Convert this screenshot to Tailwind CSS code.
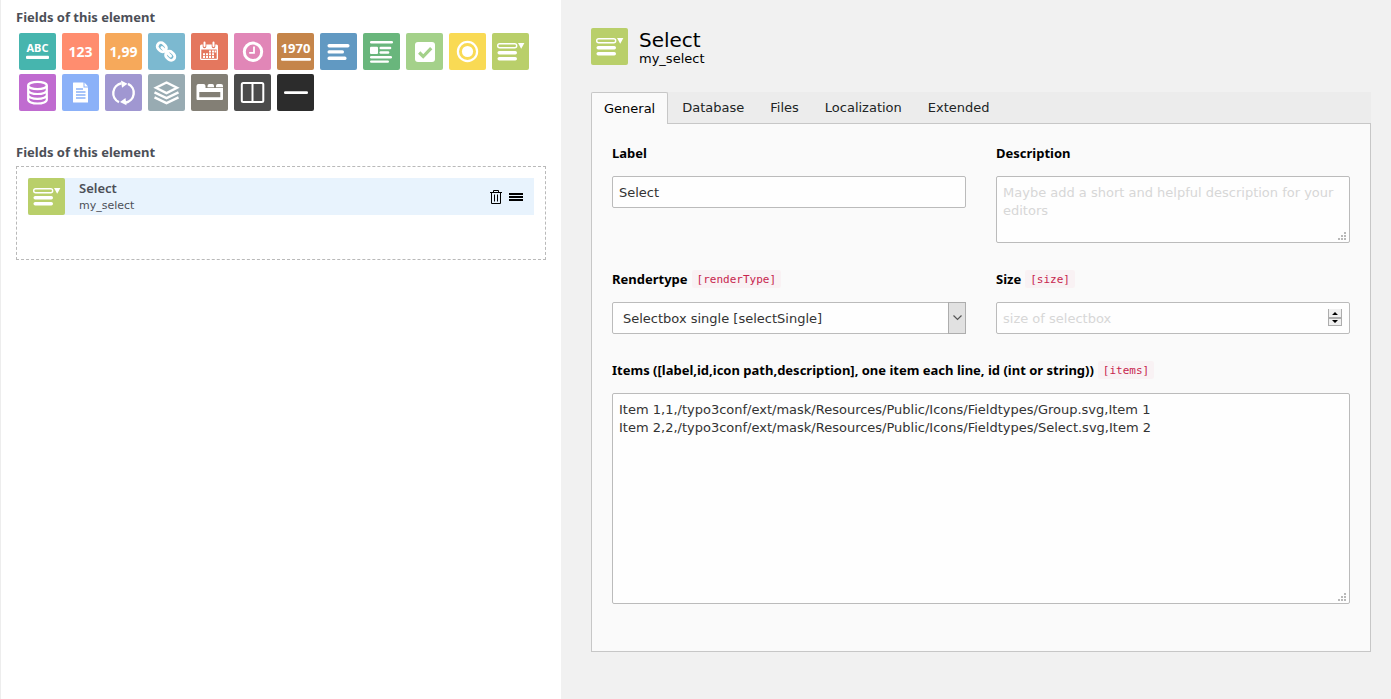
<!DOCTYPE html>
<html lang="en">
<head>
<meta charset="utf-8">
<meta name="viewport" content="width=device-width, initial-scale=1">
<title>Mask – Fields of this element</title>
<script src="https://cdn.jsdelivr.net/npm/@tailwindcss/browser@4"></script>
</head>
<body class="min-h-screen bg-[#f1f1f1] text-[13px] leading-[18px] text-black font-['DejaVu_Sans',Verdana,sans-serif]">
<svg class="hidden" aria-hidden="true">
  <symbol id="select-icon" viewBox="0 0 37 37">
    <rect x="5.7" y="10.7" width="19" height="4" rx="2" fill="none" stroke="#fff" stroke-width="1.4"/>
    <path d="M26 10h6.4l-3.2 5.8z" fill="#fff"/>
    <rect x="5.5" y="18" width="19.5" height="3.4" rx="1.7" fill="#fff"/>
    <rect x="5.5" y="24" width="19.5" height="3.4" rx="1.7" fill="#fff"/>
  </symbol>
  <symbol id="grip" viewBox="0 0 8 8">
    <path d="M6 0h2v2H6zM3 3h2v2H3zM6 3h2v2H6zM0 6h2v2H0zM3 6h2v2H3zM6 6h2v2H6z" fill="#b9b9b9"/>
  </symbol>
</svg>
<div class="grid min-h-screen grid-cols-[minmax(0,561fr)_minmax(0,830fr)]">
  <section class="border-l border-[#ededed] bg-white pl-[15px] pr-[15px] pt-2">
    <h2 class="text-[13px] font-bold text-[#4c4f57] font-['Noto_Sans','DejaVu_Sans',sans-serif]">Fields of this element</h2>
    <div class="mt-[7px] flex flex-wrap gap-x-[6px] gap-y-1 pl-[3px] text-white">
      <button type="button" aria-label="String" class="size-[37px] rounded-[2px] bg-[#46b5ae]"><svg viewBox="0 0 37 37"><text x="18.5" y="19" text-anchor="middle" class="fill-white text-[11px] font-bold font-['Noto_Sans',sans-serif]">ABC</text><rect x="7" y="22.7" width="23" height="3.2" rx="1" fill="#fff"/></svg></button>
      <button type="button" aria-label="Integer" class="size-[37px] rounded-[2px] bg-[#ff8d6f]"><svg viewBox="0 0 37 37"><text x="18.5" y="24" text-anchor="middle" class="fill-white text-[14px] font-bold font-['Noto_Sans',sans-serif]">123</text></svg></button>
      <button type="button" aria-label="Float" class="size-[37px] rounded-[2px] bg-[#f6a95b]"><svg viewBox="0 0 37 37"><text x="18.5" y="24" text-anchor="middle" class="fill-white text-[14px] font-bold font-['Noto_Sans',sans-serif]">1,99</text></svg></button>
      <button type="button" aria-label="Link" class="size-[37px] rounded-[2px] bg-[#7cb9d0]"><svg viewBox="0 0 37 37" fill="none" stroke="#fff" stroke-width="2.8"><rect x="-5" y="-3.7" width="10" height="7.4" rx="3.7" transform="translate(13.8 14.2) rotate(45)"/><rect x="-5" y="-3.7" width="10" height="7.4" rx="3.7" transform="translate(22.2 22.8) rotate(45)"/><path d="M14 14.5l8.5 8.5" stroke-width="3" stroke-linecap="round"/></svg></button>
      <button type="button" aria-label="Date" class="size-[37px] rounded-[2px] bg-[#e4775e]"><svg viewBox="0 0 37 37"><path d="M9 13v12.5q0 1.500 1.500 1.500h15q1.500 0 1.500-1.500V13q0-1.500-1.500-1.500h-15Q9 11.500 9 13zM10.300 16.500h15.400v9.200h-15.400z" fill="#fff" fill-rule="evenodd"/><path d="M13.500 9.500v4M22.500 9.500v4" stroke="#e4775e" stroke-width="3.600" stroke-linecap="round"/><path d="M13.500 9.500v3.500M22.500 9.500v3.500" stroke="#fff" stroke-width="2" stroke-linecap="round"/><path d="M18 17.500h2v2h-2zM21 17.500h2v2h-2zM23.600 17.500h1.600v2h-1.600zM12 20.300h2v2h-2zM15 20.300h2v2h-2zM18 20.300h2v2h-2zM21 20.300h2v2h-2zM12 23h2v2h-2zM15 23h2v2h-2zM18 23h2v2h-2zM21 23h2v2h-2z" fill="#fff"/></svg></button>
      <button type="button" aria-label="Datetime" class="size-[37px] rounded-[2px] bg-[#e186b7]"><svg viewBox="0 0 37 37" fill="none" stroke="#fff"><circle cx="19" cy="18.800" r="8.700" stroke-width="3"/><path d="M20 13.500v6.300h-4.800" stroke-width="1.800"/></svg></button>
      <button type="button" aria-label="Timestamp" class="size-[37px] rounded-[2px] bg-[#c5854a]"><svg viewBox="0 0 37 37"><text x="18.500" y="20" text-anchor="middle" class="fill-white text-[13px] font-bold font-['Noto_Sans',sans-serif]">1970</text><rect x="4" y="25" width="30" height="2.800" rx="1.200" fill="#fff"/></svg></button>
      <button type="button" aria-label="Text" class="size-[37px] rounded-[2px] bg-[#6199c2]"><svg viewBox="0 0 37 37" fill="#fff"><rect x="7.500" y="11" width="22" height="3.400" rx="1.600"/><rect x="7.500" y="17.200" width="16.500" height="3.400" rx="1.600"/><rect x="7.500" y="23.600" width="19" height="3.400" rx="1.600"/></svg></button>
      <button type="button" aria-label="Richtext" class="size-[37px] rounded-[2px] bg-[#69b67c]"><svg viewBox="0 0 37 37" fill="#fff"><rect x="7" y="8" width="23" height="2.600" rx="1.300"/><rect x="7" y="13.700" width="8" height="7.300" rx="1"/><rect x="16.500" y="13.800" width="11.800" height="2.400" rx="1.200"/><rect x="16.500" y="18.300" width="9.800" height="2.400" rx="1.200"/><rect x="7" y="23" width="22" height="2.400" rx="1.200"/><rect x="7" y="27.400" width="19" height="2.400" rx="1.200"/></svg></button>
      <button type="button" aria-label="Checkbox" class="size-[37px] rounded-[2px] bg-[#a4d18a]"><svg viewBox="0 0 37 37"><rect x="9" y="9" width="20" height="20" rx="3" fill="#fff"/><path d="M13.200 19.500l4 4 8-8.400" fill="none" stroke="#a4d18a" stroke-width="3.200"/></svg></button>
      <button type="button" aria-label="Radio" class="size-[37px] rounded-[2px] bg-[#f9da54]"><svg viewBox="0 0 37 37"><circle cx="18.500" cy="18.500" r="9.600" fill="none" stroke="#fff" stroke-width="2.200"/><circle cx="18.500" cy="18.500" r="5.600" fill="#fff"/></svg></button>
      <button type="button" aria-label="Select" class="size-[37px] rounded-[2px] bg-[#b9cf6a]"><svg viewBox="0 0 37 37"><use href="#select-icon"/></svg></button>
      <button type="button" aria-label="Group" class="size-[37px] rounded-[2px] bg-[#c06bd0]"><svg viewBox="0 0 37 37" fill="none" stroke="#fff" stroke-width="2.200"><ellipse cx="18.500" cy="11.500" rx="9.300" ry="3.700"/><path d="M9.200 11.500v14.300c0 2 4 3.700 9.300 3.700s9.300-1.700 9.300-3.700V11.500M9.200 16.300c0 2 4 3.700 9.300 3.700s9.300-1.700 9.300-3.700M9.200 21.100c0 2 4 3.700 9.300 3.700s9.300-1.700 9.300-3.700"/></svg></button>
      <button type="button" aria-label="File" class="size-[37px] rounded-[2px] bg-[#8bb1f8]"><svg viewBox="0 0 37 37"><path d="M11.500 8.500h10v5h4.500v15H11.500q-.5 0-.5-.5V9q0-.5.500-.5zM22.500 8.500l3.500 4h-3.500z" fill="#fff"/><path d="M14 15h7M14 18h9.500M14 21h9.500M14 24h9.500" stroke="#8bb1f8" stroke-width="1.300"/></svg></button>
      <button type="button" aria-label="Inline" class="size-[37px] rounded-[2px] bg-[#a097d1]"><svg viewBox="0 0 37 37"><path d="M14 28.200A10 10 0 0 1 16.500 9.300M23 9.800a10 10 0 0 1-2.500 18.900" fill="none" stroke="#fff" stroke-width="2.400"/><path d="M16 6.500l6.500 3.200-5.500 4zM21.500 31.300l-6.500-3.200 5.500-4z" fill="#fff"/></svg></button>
      <button type="button" aria-label="Content" class="size-[37px] rounded-[2px] bg-[#98abb2]"><svg viewBox="0 0 37 37" fill="none" stroke="#fff" stroke-width="2.400"><path d="M18.500 8.500l10.500 5.300-10.500 5.300L8 13.800z"/><path d="M6.500 18.300l12 5.900 12-5.900M6.500 23.300l12 5.900 12-5.900"/></svg></button>
      <button type="button" aria-label="Tab" class="size-[37px] rounded-[2px] bg-[#837f75]"><svg viewBox="0 0 37 37"><path d="M5.500 25V12q0-2 2-2h5q2 0 2 2v2h17.500v11q0 1-1 1H6.500q-1 0-1-1zM8.300 18v5.300h21V18z" fill="#fff" fill-rule="evenodd"/><path d="M16.500 13.300V12q0-2 1.800-2h3q1.700 0 1.700 2v1.300zM25 13.300V12q0-2 1.800-2h3.200q2 0 2 2v1.300z" fill="#fff"/></svg></button>
      <button type="button" aria-label="Palette" class="size-[37px] rounded-[2px] bg-[#4b4b4b]"><svg viewBox="0 0 37 37" fill="none" stroke="#fff" stroke-width="2"><rect x="7.800" y="9" width="21.500" height="19" rx="1.500"/><path d="M18.500 9v19"/></svg></button>
      <button type="button" aria-label="Linebreak" class="size-[37px] rounded-[2px] bg-[#2c2c2c]"><svg viewBox="0 0 37 37"><rect x="7" y="17.300" width="24" height="2.800" rx="1.300" fill="#fff"/></svg></button>
    </div>

    <h2 class="mt-8 text-[13px] font-bold text-[#4c4f57] font-['Noto_Sans','DejaVu_Sans',sans-serif]">Fields of this element</h2>
    <div class="mt-[5px] border border-dashed border-[#b9b9b9] px-[11px] pb-11 pt-[11px]">
      <div class="flex items-center bg-[#e8f3fd]">
        <svg viewBox="0 0 37 37" class="size-[37px] shrink-0 rounded-[2px] bg-[#b9cf6a]"><use href="#select-icon"/></svg>
        <div class="ml-[14px] flex-1 text-[#4c4f57]">
          <div class="text-[13px] font-semibold font-['Noto_Sans','DejaVu_Sans',sans-serif]">Select</div>
          <div class="text-[11px] leading-[18px]">my_select</div>
        </div>
        <button type="button" aria-label="Delete field" class="mr-[7px]"><svg class="h-[14px] w-3" viewBox="0 0 12 14" fill="none" stroke="#000"><path d="M0 2.500h12M3.500 2V.5h5V2M1.500 2.500v11h9v-11M4.500 4.500v7M7.500 4.500v7"/></svg></button>
        <button type="button" aria-label="Move field" class="mr-[11px]"><svg class="h-2 w-[14px]" viewBox="0 0 14 8"><path d="M0 0h14v2H0zM0 3h14v2H0zM0 6h14v2H0z"/></svg></button>
      </div>
    </div>
  </section>

  <main class="pb-[47px] pl-[30px] pr-5 pt-7">
    <header class="flex">
      <svg viewBox="0 0 37 37" class="size-[37px] rounded-[2px] bg-[#b9cf6a]"><use href="#select-icon"/></svg>
      <div class="ml-[11px]">
        <h1 class="text-[20px] leading-6">Select</h1>
        <p class="leading-[14px]">my_select</p>
      </div>
    </header>

    <div role="tablist" class="mt-[26px] flex gap-[2px] bg-[#ececec] text-[#212424]">
      <button type="button" role="tab" aria-selected="true" class="relative z-10 -mb-px h-8 rounded-t-[2px] border border-b-0 border-[#c7c7c7] bg-[#fafafa] px-3 text-black">General</button>
      <button type="button" role="tab" aria-selected="false" class="h-[31px] px-3 pt-px">Database</button>
      <button type="button" role="tab" aria-selected="false" class="h-[31px] px-3 pt-px">Files</button>
      <button type="button" role="tab" aria-selected="false" class="h-[31px] px-3 pt-px">Localization</button>
      <button type="button" role="tab" aria-selected="false" class="h-[31px] px-3 pt-px">Extended</button>
    </div>

    <form class="grid grid-cols-2 gap-x-[30px] gap-y-[27px] border border-[#c7c7c7] bg-[#fafafa] px-5 pb-[47px] pt-5">
      <div>
        <label for="label" class="mb-[14px] block font-bold font-['Noto_Sans','DejaVu_Sans',sans-serif]">Label</label>
        <input id="label" type="text" value="Select" class="block h-8 w-full rounded-[2px] border border-[#bbb] bg-[#fefefe] px-[6px] text-[#333]">
      </div>
      <div>
        <label for="description" class="mb-[14px] block font-bold font-['Noto_Sans','DejaVu_Sans',sans-serif]">Description</label>
        <div class="relative">
          <textarea id="description" placeholder="Maybe add a short and helpful description for your editors" class="block h-[67px] w-full resize-none rounded-[2px] border border-[#bbb] bg-[#fefefe] px-[6px] py-[7px] text-[#333] placeholder:text-[#d7d7d7]"></textarea>
          <svg class="pointer-events-none absolute bottom-[3px] right-1 size-2"><use href="#grip"/></svg>
        </div>
      </div>
      <div>
        <div class="mb-[14px] flex h-[18px] items-center gap-1">
          <label for="rendertype" class="font-bold font-['Noto_Sans','DejaVu_Sans',sans-serif]">Rendertype</label>
          <code class="rounded-[2px] bg-[#f9f2f4] px-[5px] pt-[2px] text-[11px] leading-4 text-[#c7254e] font-['DejaVu_Sans_Mono',monospace]">[renderType]</code>
        </div>
        <div class="relative">
          <select id="rendertype" class="block h-8 w-full appearance-none rounded-[2px] border border-[#bbb] bg-[#fefefe] pl-[10px] pr-6 pt-px text-[#333]"><option>Selectbox single [selectSingle]</option></select>
          <span class="pointer-events-none absolute inset-y-0 right-0 flex w-[18px] items-center justify-center border border-[#adadad] bg-[#e1e1e1]"><svg class="h-[6px] w-[9px]" viewBox="0 0 9 6" fill="none" stroke="#555" stroke-width="1.200"><path d="M.5.500l4 4 4-4"/></svg></span>
        </div>
      </div>
      <div>
        <div class="mb-[14px] flex h-[18px] items-center gap-1">
          <label for="size" class="font-bold font-['Noto_Sans','DejaVu_Sans',sans-serif]">Size</label>
          <code class="rounded-[2px] bg-[#f9f2f4] px-[5px] pt-[2px] text-[11px] leading-4 text-[#c7254e] font-['DejaVu_Sans_Mono',monospace]">[size]</code>
        </div>
        <div class="relative">
          <input id="size" type="number" placeholder="size of selectbox" class="block h-8 w-full rounded-[2px] border border-[#bbb] bg-[#fefefe] px-[6px] text-[#333] [appearance:textfield] placeholder:text-[#d7d7d7]">
          <svg class="pointer-events-none absolute right-2 top-[7px] h-[17px] w-[14px]" viewBox="0 0 14 17"><path d="M0 0h14v17H0z" fill="#adadad"/><path d="M1 0h12v8H1zM1 10h12v6H1z" fill="#f0f0f0"/><path d="M4 6h6L7 3zM4 11h6l-3 3z"/></svg>
        </div>
      </div>
      <div class="col-span-2">
        <div class="mb-[14px] flex h-[18px] items-center gap-1">
          <label for="items" class="font-bold font-['Noto_Sans','DejaVu_Sans',sans-serif]">Items ([label,id,icon path,description], one item each line, id (int or string))</label>
          <code class="rounded-[2px] bg-[#f9f2f4] px-[5px] pt-[2px] text-[11px] leading-4 text-[#c7254e] font-['DejaVu_Sans_Mono',monospace]">[items]</code>
        </div>
        <div class="relative">
          <textarea id="items" class="block h-[211px] w-full resize-none rounded-[2px] border border-[#bbb] bg-[#fefefe] px-[6px] py-[7px] text-[#333]">Item 1,1,/typo3conf/ext/mask/Resources/Public/Icons/Fieldtypes/Group.svg,Item 1
Item 2,2,/typo3conf/ext/mask/Resources/Public/Icons/Fieldtypes/Select.svg,Item 2</textarea>
          <svg class="pointer-events-none absolute bottom-[3px] right-1 size-2"><use href="#grip"/></svg>
        </div>
      </div>
    </form>
  </main>
</div>
</body>
</html>
